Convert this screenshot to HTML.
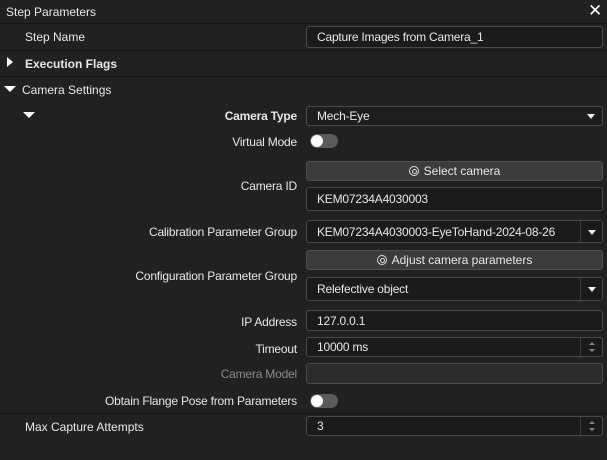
<!DOCTYPE html>
<html><head><style>
*{box-sizing:border-box;margin:0;padding:0}
body{width:607px;height:460px;background:#212121;font-family:"Liberation Sans",sans-serif;font-size:12px;color:#e8e8e8;position:relative;overflow:hidden}
.a{position:absolute}
.lbl{position:absolute;right:310px;white-space:nowrap;letter-spacing:-0.2px}
.hl{position:absolute;left:0;width:607px;height:1px;background:#141414}
.inp{position:absolute;left:306px;width:297px;background:#1b1b1b;border:1px solid #4a4a4a;border-radius:3px;padding-left:10px;display:flex;align-items:center;letter-spacing:-0.2px}
.btn{position:absolute;left:306px;width:297px;background:#3b3b3b;border:1px solid #4e4e4e;border-radius:3px;display:flex;align-items:center;justify-content:center}
.dd{position:absolute;right:0;top:0;bottom:0;width:22px;border-left:1px solid #3a3a3a;background:#1b1b1b}
.dd:after{content:"";position:absolute;left:7px;top:50%;margin-top:-2px;border-left:4px solid transparent;border-right:4px solid transparent;border-top:5px solid #eee}
.sp{position:absolute;right:0;top:0;bottom:0;width:22px;border-left:1px solid #3a3a3a}
.sp:before{content:"";position:absolute;left:8px;top:4px;border-left:3px solid transparent;border-right:3px solid transparent;border-bottom:3px solid #888}
.sp:after{content:"";position:absolute;left:8px;bottom:4px;border-left:3px solid transparent;border-right:3px solid transparent;border-top:3px solid #888}
.tg{position:absolute;left:310px;width:28px;height:14px;border-radius:7px;background:#5a5a5a}
.tg:after{content:"";position:absolute;left:1px;top:1px;width:12px;height:12px;border-radius:6px;background:#fff}
.gear{display:inline-block;width:10px;height:10px;border:1.5px solid #ddd;border-radius:50%;margin-right:5px;position:relative}
.gear:after{content:"";position:absolute;left:2px;top:2px;width:3px;height:3px;border:1px solid #ddd;border-radius:50%}
</style></head><body>
<div class="a" style="left:6px;top:5px">Step Parameters</div>
<div class="a" style="left:588px;top:1px;font-size:17px;color:#fff">✕</div>
<div class="hl" style="top:23px"></div>
<div class="a" style="left:25px;top:30px">Step Name</div>
<div class="inp" style="top:26px;height:22px">Capture Images from Camera_1</div>
<div class="hl" style="top:50px"></div>
<div class="a" style="left:7px;top:57px;border-top:5px solid transparent;border-bottom:5px solid transparent;border-left:6px solid #fff"></div>
<div class="a" style="left:25px;top:57px;font-weight:bold">Execution Flags</div>
<div class="hl" style="top:76px"></div>
<div class="a" style="left:4px;top:86px;border-left:6px solid transparent;border-right:6px solid transparent;border-top:6px solid #fff"></div>
<div class="a" style="left:22px;top:83px">Camera Settings</div>
<div class="a" style="left:23px;top:112px;border-left:6px solid transparent;border-right:6px solid transparent;border-top:6px solid #fff"></div>
<div class="lbl" style="top:109px;font-weight:bold">Camera Type</div>
<div class="inp" style="top:106px;height:20px;background:#1e1e1e">Mech-Eye<div class="dd" style="border-left:none;background:transparent"></div></div>
<div class="lbl" style="top:135px">Virtual Mode</div>
<div class="tg" style="top:134px"></div>
<div class="btn" style="top:161px;height:20px"><span class="gear"></span>Select camera</div>
<div class="lbl" style="top:179px">Camera ID</div>
<div class="inp" style="top:187px;height:24px">KEM07234A4030003</div>
<div class="lbl" style="top:225px">Calibration Parameter Group</div>
<div class="inp" style="top:220px;height:23px">KEM07234A4030003-EyeToHand-2024-08-26<div class="dd"></div></div>
<div class="btn" style="top:250px;height:20px"><span class="gear"></span>Adjust camera parameters</div>
<div class="lbl" style="top:269px">Configuration Parameter Group</div>
<div class="inp" style="top:277px;height:24px">Relefective object<div class="dd"></div></div>
<div class="lbl" style="top:315px">IP Address</div>
<div class="inp" style="top:310px;height:21px">127.0.0.1</div>
<div class="lbl" style="top:342px">Timeout</div>
<div class="inp" style="top:337px;height:20px">10000 ms<div class="sp"></div></div>
<div class="lbl" style="top:367px;color:#8a8a8a">Camera Model</div>
<div class="inp" style="top:363px;height:21px;background:#2b2b2b"></div>
<div class="lbl" style="top:394px">Obtain Flange Pose from Parameters</div>
<div class="tg" style="top:394px"></div>
<div class="hl" style="top:413px"></div>
<div class="a" style="left:25px;top:420px">Max Capture Attempts</div>
<div class="inp" style="top:416px;height:20px">3<div class="sp"></div></div>
</body></html>
